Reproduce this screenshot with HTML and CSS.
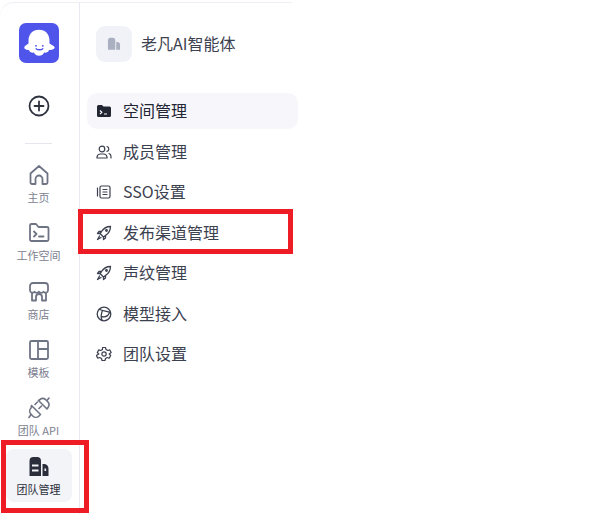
FILE: index.html
```html
<!DOCTYPE html>
<html lang="zh">
<head>
    <meta charset="UTF-8">
    <title>团队管理</title>
    <link rel="stylesheet" href="styles.css">
</head>
<body>
  <div class="app">
    <div class="rail">
      <div class="logo">
        <svg width="42" height="42" viewBox="0 0 42 42">
          <path d="M21 7C14 7 10 12 10 18V21.500C8 23 5.500 24 5.500 25.800C5.500 27.800 8.500 28.800 10.500 28.300C11 30.500 13.500 31.500 15.500 31C16.500 33 19 34.500 21 34.500C23.500 34.500 25.500 33 26.500 31C28.500 31.500 31 30.500 31.500 28.300C33.500 28.800 37.500 27.800 37.500 25.800C37.500 24 34 23 32 21.500V18C32 12 28 7 21 7z" fill="#fff"/>
          <path d="M18 27c1.500 1.500 5.500 1.500 7 0" fill="none" stroke="#4f55ea" stroke-width="1.400" stroke-linecap="round"/>
          <circle cx="17.800" cy="24" r="1" fill="#4f55ea"/>
          <circle cx="25" cy="24" r="1" fill="#4f55ea"/>
        </svg>
      </div>
      <div class="add">
        <svg width="22" height="22" viewBox="0 0 22 22" fill="none" stroke="#2f3340" stroke-width="1.800" stroke-linecap="round">
          <circle cx="11" cy="11" r="9.500"/>
          <path d="M11 6.500v9M6.500 11h9"/>
        </svg>
      </div>
      <div class="rail-line"></div>

      <div class="rail-item">
        <svg width="22" height="22" viewBox="0 0 22 22" fill="none" stroke="#6f7485" stroke-width="1.800" stroke-linejoin="round">
          <path d="M2.500 9.500 11 2l8.500 7.500v9a1.500 1.500 0 0 1-1.500 1.500h-3.500v-5a3.500 3.500 0 0 0-7 0v5H4a1.500 1.500 0 0 1-1.500-1.500z"/>
        </svg>
        <span>主页</span>
      </div>
      <div class="rail-item">
        <svg width="22" height="22" viewBox="0 0 22 22" fill="none" stroke="#6f7485" stroke-width="1.800" stroke-linecap="round" stroke-linejoin="round">
          <path d="M2 3.500A1.500 1.500 0 0 1 3.500 2H8l2.500 3H19a1.500 1.500 0 0 1 1.500 1.500v11A1.500 1.500 0 0 1 19 19H3.500A1.500 1.500 0 0 1 2 17.500z"/>
          <path d="m6 9.500 2.500 2.500L6 14.500M11 14.500h4.500"/>
        </svg>
        <span>工作空间</span>
      </div>
      <div class="rail-item">
        <svg width="22" height="22" viewBox="0 0 22 22" fill="none" stroke="#6f7485" stroke-width="1.800" stroke-linecap="round" stroke-linejoin="round">
          <path d="M5 2h12a3 3 0 0 1 3 3v4.500a2.500 2.500 0 0 1-4.500 1.200 2.800 2.800 0 0 1-4.500 0 2.800 2.800 0 0 1-4.500 0A2.500 2.500 0 0 1 2 9.500V5a3 3 0 0 1 3-3z"/>
          <path d="M4 12.500V19.500h4V16a3 3 0 0 1 6 0v3.500h4V12.500"/>
        </svg>
        <span>商店</span>
      </div>
      <div class="rail-item">
        <svg width="22" height="22" viewBox="0 0 22 22" fill="none" stroke="#6f7485" stroke-width="1.800" stroke-linejoin="round">
          <rect x="2" y="2" width="18" height="18" rx="1.500"/>
          <path d="M10 2v18M10 10h10"/>
        </svg>
        <span>模板</span>
      </div>
      <div class="rail-item">
        <svg width="22" height="22" viewBox="0 0 22 22" fill="none" stroke="#6f7485" stroke-width="1.600" stroke-linecap="round" stroke-linejoin="round">
          <path d="M3.500 8.500 12.500 17.500 11 19a4.500 4.500 0 0 1-6.300 0L3 17.300a4.500 4.500 0 0 1 0-6.300z"/>
          <path d="M3 17.500 1 20.500M7 7.500 9.500 5M11 11.500l2.500-2.500"/>
          <path d="M10.500 3.500 19 12l1-1.500a4.500 4.500 0 0 0 0-5.500L17.500 2.500a4.500 4.500 0 0 0-5.500 0z"/>
          <path d="M19 3.500 21 1"/>
        </svg>
        <span>团队 API</span>
      </div>
      <div class="rail-item rail-active">
        <svg width="22" height="22" viewBox="0 0 22 22">
          <path d="M1.500 5a4 4 0 0 1 4-4h3.500a4 4 0 0 1 4 4v15H1.500z" fill="#2a2e3b"/>
          <path d="M14.500 8h1.500a4.500 4.500 0 0 1 4.500 4.500V20h-6z" fill="#2a2e3b"/>
          <rect x="4" y="8.500" width="6.500" height="2" fill="#f3f4f8"/>
          <rect x="4" y="13.500" width="6.500" height="2" fill="#f3f4f8"/>
          <rect x="16.500" y="12.500" width="1.600" height="2.500" fill="#f3f4f8"/>
        </svg>
        <span>团队管理</span>
      </div>
    </div>

    <div class="panel">
      <div class="team">
        <div class="team-badge">
          <svg width="14" height="14" viewBox="0 0 22 22" fill="#aab0c0">
            <path d="M1.500 5a4 4 0 0 1 4-4h3.500a4 4 0 0 1 4 4v15H1.500z"/>
            <path d="M14.500 8h1.500a4.500 4.500 0 0 1 4.500 4.500V20h-6z"/>
          </svg>
        </div>
        <span>老凡AI智能体</span>
      </div>

      <div class="menu">
        <div class="menu-item menu-active">
          <svg width="16" height="16" viewBox="0 0 16 16">
            <path d="M1 3.500A1.500 1.500 0 0 1 2.500 2H6l1.500 1.500h6A1.500 1.500 0 0 1 15 5v7.500a1.500 1.500 0 0 1-1.500 1.500h-11A1.500 1.500 0 0 1 1 12.500z" fill="#222633"/>
            <path d="m4 7.500 1.800 1.800L4 11M8 11h3" fill="none" stroke="#fff" stroke-width="1.200"/>
          </svg>
          <span>空间管理</span>
        </div>
        <div class="menu-item">
          <svg width="16" height="16" viewBox="0 0 16 16" fill="none" stroke="#3c4150" stroke-width="1.200" stroke-linecap="round">
            <circle cx="6" cy="5" r="2.800"/>
            <path d="M1 14v-1a3.500 3.500 0 0 1 3.500-3h3A3.500 3.500 0 0 1 11 13v1zM11 2.500a2.500 2.500 0 0 1 0 4.800M13 9.500a3 3 0 0 1 2 3V14"/>
          </svg>
          <span>成员管理</span>
        </div>
        <div class="menu-item">
          <svg width="16" height="16" viewBox="0 0 16 16" fill="none" stroke="#3c4150" stroke-width="1.200" stroke-linecap="round">
            <rect x="4" y="2" width="10" height="12" rx="1.500"/>
            <path d="M1.500 4v8M7 5.500h4M7 8h4M7 10.500h4"/>
          </svg>
          <span>SSO设置</span>
        </div>
        <div class="menu-item">
          <svg width="16" height="16" viewBox="0 0 16 16" fill="none" stroke="#3c4150" stroke-width="1.300" stroke-linecap="round" stroke-linejoin="round">
            <path d="M5.500 6.500C7.500 3.500 10.500 1.500 14.500 1.500c0 4-2 7-5 9L7.500 12 4 8.500z"/>
            <circle cx="10.500" cy="5.500" r=".8"/>
            <path d="M5.500 6.500H3L1.500 8.500 4 8.500M9.500 10.500V13l-2 1.500V12M3.500 11 1.500 14.500 5 12.500"/>
          </svg>
          <span>发布渠道管理</span>
        </div>
        <div class="menu-item">
          <svg width="16" height="16" viewBox="0 0 16 16" fill="none" stroke="#3c4150" stroke-width="1.300" stroke-linecap="round" stroke-linejoin="round">
            <path d="M5.500 6.500C7.500 3.500 10.500 1.500 14.500 1.500c0 4-2 7-5 9L7.500 12 4 8.500z"/>
            <circle cx="10.500" cy="5.500" r=".8"/>
            <path d="M5.500 6.500H3L1.500 8.500 4 8.500M9.500 10.500V13l-2 1.500V12M3.500 11 1.500 14.500 5 12.500"/>
          </svg>
          <span>声纹管理</span>
        </div>
        <div class="menu-item">
          <svg width="16" height="16" viewBox="0 0 16 16" fill="none" stroke="#3c4150" stroke-width="1.300" stroke-linecap="round" stroke-linejoin="round">
            <circle cx="8" cy="8" r="6.800"/>
            <path d="M3.300 3.200C6.500 5 11 5 14.500 6.500M6.500 4.500C5 8 4.800 11.500 6 14.500M5.300 10.500C9 11.500 12.500 10 13.800 5.800"/>
          </svg>
          <span>模型接入</span>
        </div>
        <div class="menu-item">
          <svg width="16" height="16" viewBox="0 0 16 16" fill="none" stroke="#3c4150" stroke-width="1.200" stroke-linejoin="round">
            <path d="M6.500 1.500h3l.5 2 1.700 1 2-.6 1.500 2.600L13.200 8l1.500 1.500-1.500 2.600-2-.6-1.700 1-.5 2h-3l-.5-2-1.700-1-2 .6-1.500-2.600L2.800 8 1.300 6.500l1.500-2.600 2 .6 1.700-1z"/>
            <circle cx="8" cy="8" r="2.200"/>
          </svg>
          <span>团队设置</span>
        </div>
      </div>
    </div>

    <div class="mark mark-menu"></div>
    <div class="mark mark-rail"></div>
  </div>
</body>
</html>
```

FILE: styles.css
```css
html, body {
    margin: 0;
    padding: 0;
    background-color: #fff;
}

body {
    width: 613px;
    height: 529px;
    overflow: hidden;
    font-family: "Noto Sans CJK SC", "Noto Sans", sans-serif;
}

.app {
    position: relative;
    display: flex;
    width: 292px;
    height: 511px;
    margin-top: 2px;
    border-top: 1px solid #eeeef6;
    border-top-left-radius: 14px;
}

.rail {
    width: 77px;
    padding-right: 2px;
    border-right: 1px solid #e8e9f2;
    display: flex;
    flex-direction: column;
    align-items: center;
}

.logo {
    width: 40px;
    height: 40px;
    margin-top: 20px;
    background-color: #4f55ea;
    border-radius: 7px;
    display: flex;
    align-items: center;
    justify-content: center;
}

.add {
    margin-top: 32px;
    height: 22px;
}

.rail-line {
    width: 27px;
    height: 1px;
    margin: 26px 0 20px;
    background-color: #e6e7ee;
}

.rail-item {
    width: 66px;
    height: 58.300px;
    flex-shrink: 0;
    display: flex;
    flex-direction: column;
    align-items: center;
    color: #7c8090;
    font-size: 11px;
    line-height: 16px;
}

.rail-item svg {
    margin-bottom: 3px;
}

.rail-active {
    height: 46px;
    margin-top: -6px;
    padding-top: 7px;
    background-color: #f3f4f8;
    border-radius: 8px;
    color: #2a2e3b;
}

.panel {
    flex: 1;
    min-width: 0;
}

.team {
    display: flex;
    align-items: center;
    gap: 9px;
    margin: 23px 0 0 16px;
    color: #3c4150;
    font-size: 16px;
}

.team span {
    padding-bottom: 3px;
}

.team-badge {
    width: 36px;
    height: 36px;
    background-color: #f1f2f7;
    border-radius: 9px;
    display: flex;
    align-items: center;
    justify-content: center;
}

.menu {
    width: 211px;
    margin: 31px 0 0 7px;
    display: flex;
    flex-direction: column;
    gap: 4.500px;
}

.menu-item {
    height: 36px;
    display: flex;
    align-items: center;
    gap: 11px;
    padding-left: 9px;
    color: #3c4150;
    font-size: 16px;
    border-radius: 10px;
}

.menu-item span {
    padding-bottom: 2px;
}

.menu-active {
    background-color: #f7f7fb;
    color: #222633;
}

.mark {
    position: absolute;
    border: 5px solid #ee1c25;
    box-sizing: border-box;
}

.mark-menu {
    left: 78px;
    top: 206px;
    width: 215px;
    height: 45px;
}

.mark-rail {
    left: 1px;
    top: 437px;
    width: 88px;
    height: 73px;
}
```
